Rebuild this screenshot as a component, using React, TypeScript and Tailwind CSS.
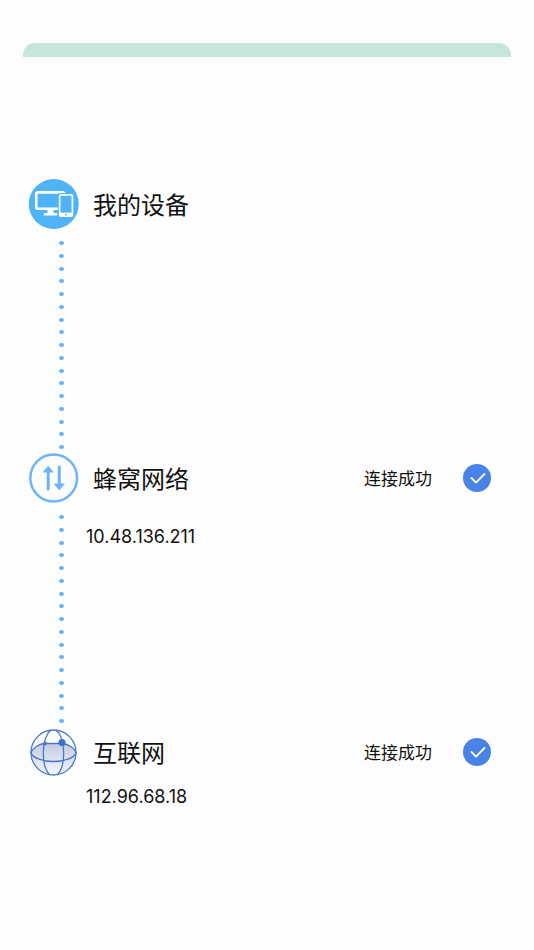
import type { ReactNode } from "react";

function DeviceIcon() {
  return (
    <svg viewBox="0 0 50 50" className="size-full" aria-hidden="true">
      <circle cx="24.8" cy="25" r="25" fill="#4fb3f8" />
      <rect x="7.2" y="13.4" width="28" height="16.4" rx="2" fill="none" stroke="#fff" strokeWidth="2.6" />
      <path d="M18.5 30h6v4h3.5v2.6H15V34h3.5z" fill="#fff" />
      <rect x="28.8" y="14" width="15" height="24.4" rx="2" fill="#4fb3f8" />
      <rect x="30.6" y="15.8" width="12.8" height="21.4" rx="1.4" fill="none" stroke="#fff" strokeWidth="1.7" />
      <path d="M30.6 33.6h12.8v3.6H30.6z" fill="#fff" />
      <circle cx="37" cy="35.6" r="0.9" fill="#4fb3f8" />
    </svg>
  );
}

function CellularIcon() {
  return (
    <svg viewBox="0 0 50 50" className="size-full" aria-hidden="true">
      <circle cx="24.7" cy="25" r="23.4" fill="none" stroke="#6bb5fa" strokeWidth="2.5" />
      <g fill="none" stroke="#6bb5fa" strokeWidth="3" strokeLinecap="round">
        <path d="M19.2 17v19" />
        <path d="M30.3 14v19" />
      </g>
      <g fill="#6bb5fa" stroke="#6bb5fa" strokeWidth="1.2" strokeLinejoin="round">
        <path d="M19.2 13.6l4.6 5.4h-9.2z" />
        <path d="M30.3 36.4l4.6-5.4h-9.2z" />
      </g>
    </svg>
  );
}

function GlobeIcon() {
  return (
    <svg viewBox="0 0 50 50" className="size-full" aria-hidden="true">
      <defs>
        <linearGradient id="globe" x1="0" y1="0" x2="0" y2="1">
          <stop offset="0" stopColor="#c3cbe2" />
          <stop offset="1" stopColor="#f5f7fc" />
        </linearGradient>
      </defs>
      <path d="M2 25.5C4 21 10 16.5 16 16.5h17C40 17 46 21.5 47 25.5A22.5 22.5 0 0 1 2 25.5z" fill="url(#globe)" />
      <g fill="none" stroke="#4a78c4" strokeWidth="1.3">
        <circle cx="24.5" cy="25.5" r="22.5" />
        <path d="M2 25.5C4 21 10 16.5 16 16.5h17C40 17 46 21.5 47 25.5" />
        <path d="M2 25.5c1 5 11 9 22.5 9s21.5-4 22.5-9" />
        <path d="M22 3C12 11 12 40 21 48" />
        <path d="M27 3C37 11 37 40 28 48" />
      </g>
      <circle cx="15.8" cy="16.5" r="1.9" fill="#4a78c4" />
      <circle cx="33" cy="15.5" r="3.6" fill="#3b6fc9" />
    </svg>
  );
}

function CheckBadge() {
  return (
    <svg viewBox="0 0 28 28" className="size-7" aria-hidden="true">
      <circle cx="14" cy="14" r="14" fill="#4a83e6" />
      <path d="M8.5 14l4.5 4.6 8.5-8.6" fill="none" stroke="#fff" strokeWidth="1.8" strokeLinecap="round" strokeLinejoin="round" />
    </svg>
  );
}

function Connector() {
  return (
    <div className="mt-3 mb-1 ml-[30px] flex h-[208px] flex-col justify-between" aria-hidden="true">
      {Array.from({ length: 17 }, (_, i) => (
        <span key={i} className="h-1 w-[5px] rounded-[50%] bg-[#5fb2fa]" />
      ))}
    </div>
  );
}

interface StepProps {
  icon: ReactNode;
  title: string;
  status?: string;
  connector?: boolean;
  children?: ReactNode;
}

function Step({ icon, title, status, connector, children }: StepProps) {
  return (
    <li className="flex">
      <div className="w-[50px] shrink-0">
        <div className="size-[50px]">{icon}</div>
        {connector && <Connector />}
      </div>
      <div className="min-w-0 flex-1 pl-[7px]">
        <div className="flex h-[50px] items-center pl-[7px] font-['Noto_Sans_CJK_SC',sans-serif]">
          <h2 className="flex-1 text-2xl">{title}</h2>
          {status && (
            <div className="flex items-center gap-[31px]">
              <span className="text-[17px] leading-7">{status}</span>
              <CheckBadge />
            </div>
          )}
        </div>
        {children}
      </div>
    </li>
  );
}

export default function App() {
  return (
    <main className="min-h-screen bg-[#fdfdfd] pt-[43px] font-['Inter','Noto_Sans_CJK_SC',sans-serif] text-[#111111]">
      <div className="mx-[23px] h-[14px] rounded-t-xl bg-[#c6e5dd]" />
      <ol className="mt-[122px] pr-[43px] pl-[29px]">
        <Step icon={<DeviceIcon />} title="我的设备" connector />
        <Step icon={<CellularIcon />} title="蜂窝网络" status="连接成功" connector>
          <p className="mt-5 text-lg">10.48.136.211</p>
        </Step>
        <Step icon={<GlobeIcon />} title="互联网" status="连接成功">
          <p className="mt-1.5 text-lg">112.96.68.18</p>
        </Step>
      </ol>
    </main>
  );
}
